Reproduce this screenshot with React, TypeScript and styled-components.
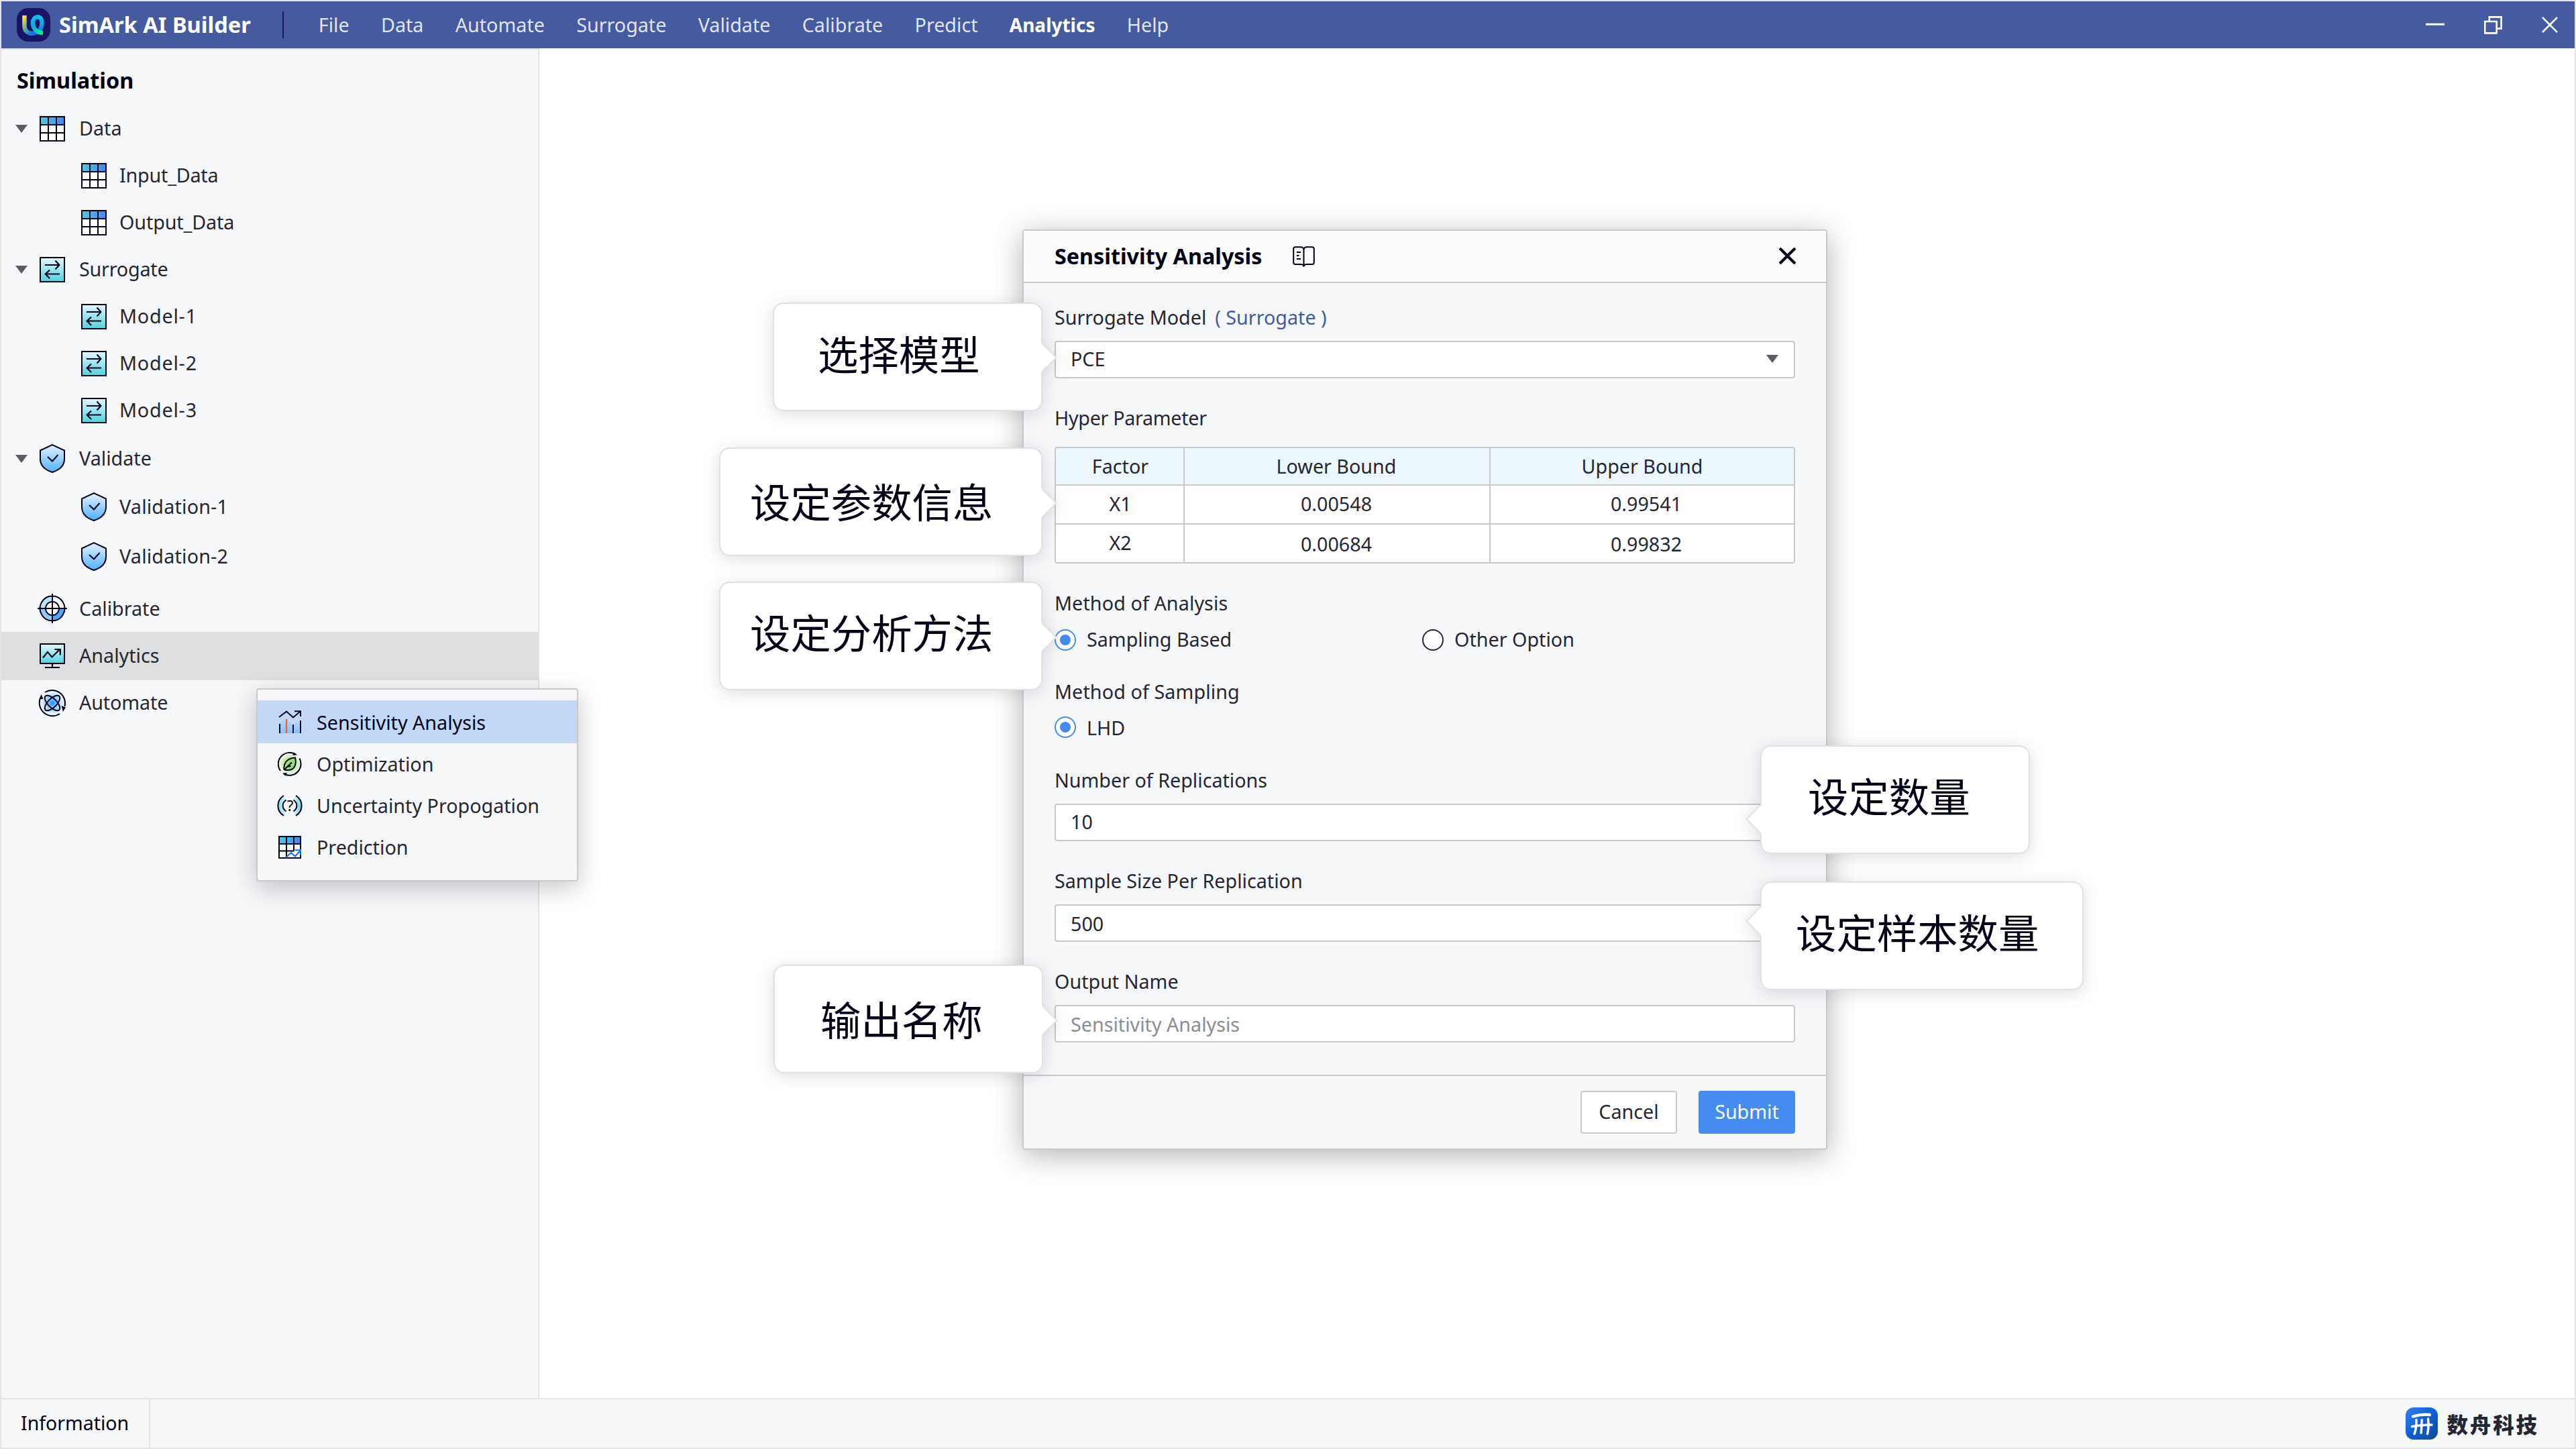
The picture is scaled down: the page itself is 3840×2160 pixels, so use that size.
import React from "react";
import styled, { createGlobalStyle, css } from "styled-components";

const color = {
  frame: "#e4e4e5",
  header: "#455a9f",
  navy: "#1a1464",
  panel: "#f6f7f9",
  line: "#c8c9cb",
  text: "#262633",
  ink: "#000014",
  primary: "#458bf0",
  caret: "#5b5b66",
};

const GlobalStyle = createGlobalStyle`
  *, *::before, *::after { box-sizing: border-box; }
  body {
    margin: 0;
    background: #fff;
    color: ${color.text};
    font-family: "Noto Sans", "Noto Sans CJK SC", sans-serif;
    font-size: 28.7px;
    line-height: 40px;
  }
`;

/* ---------- window frame ---------- */

const Window = styled.div`
  position: relative;
  display: flex;
  flex-direction: column;
  width: 3840px;
  height: 2160px;
  overflow: hidden;
  border: 2px solid ${color.frame};
  background: #fff;
`;

const Header = styled.header`
  display: flex;
  align-items: center;
  flex: none;
  height: 70px;
  padding-left: 23px;
  background: ${color.header};
`;

const Brand = styled.div`
  margin-left: 13px;
  color: #fff;
  font-size: 32.6px;
  font-weight: 700;
  white-space: nowrap;
`;

const HeaderDivider = styled.div`
  width: 2px;
  height: 40px;
  margin: 0 52px 0 47px;
  background: ${color.navy};
`;

const Menu = styled.nav`
  display: flex;
  gap: 47.25px;
`;

const MenuEntry = styled.span<{ $active?: boolean }>`
  color: rgba(255, 255, 255, 0.85);
  ${(p) =>
    p.$active &&
    css`
      color: #fff;
      font-size: 28px;
      font-weight: 700;
    `}
`;

const WindowControls = styled.div`
  display: flex;
  align-items: center;
  gap: 59px;
  margin-left: auto;
  padding-right: 25px;
`;

const Main = styled.div`
  display: flex;
  flex: 1;
`;

const Sidebar = styled.aside`
  width: 802px;
  border-top: 2px solid ${color.frame};
  border-right: 2px solid ${color.frame};
  background: ${color.panel};
`;

const SidebarTitle = styled.h2`
  margin: 25px 0 18px 23px;
  color: ${color.ink};
  font-size: 32.4px;
  font-weight: 700;
  line-height: 40px;
`;

const TreeRow = styled.div<{
  $height?: number;
  $gap?: number;
  $child?: boolean;
  $selected?: boolean;
}>`
  display: flex;
  align-items: center;
  height: ${(p) => p.$height ?? 70}px;
  margin-top: ${(p) => p.$gap ?? 0}px;
  padding-left: ${(p) => (p.$child ? 113 : 21)}px;
  background: ${(p) => (p.$selected ? "#dedfe1" : "transparent")};
`;

const CaretSlot = styled.span`
  display: flex;
  width: 30px;
`;

const IconSlot = styled.span`
  display: flex;
  align-items: center;
  justify-content: center;
  width: 50px;
  height: 50px;
`;

const TreeLabel = styled.span<{ $child?: boolean; $tracking?: number }>`
  margin-left: ${(p) => (p.$child ? 13 : 15)}px;
  padding-bottom: 2px;
  letter-spacing: ${(p) => p.$tracking ?? 0}px;
`;

const Footer = styled.footer`
  display: flex;
  align-items: stretch;
  flex: none;
  height: 74px;
  border-top: 2px solid ${color.frame};
  background: ${color.panel};
`;

const FooterCell = styled.div`
  display: flex;
  align-items: center;
  width: 222px;
  padding: 0 0 2px 29px;
  border-right: 2px solid ${color.frame};
  color: ${color.ink};
  font-size: 28.5px;
`;

const Company = styled.div`
  display: flex;
  align-items: center;
  gap: 13px;
  margin-left: auto;
  padding-right: 53px;
`;

const CompanyName = styled.span`
  font-family: "Noto Sans CJK SC", sans-serif;
  font-size: 31.5px;
  font-weight: 900;
  letter-spacing: 2.9px;
  line-height: 40px;
`;

/* ---------- context menu ---------- */

const ContextMenu = styled.div`
  position: absolute;
  left: 380px;
  top: 1024px;
  width: 480px;
  height: 288px;
  padding-top: 16px;
  border: 2px solid ${color.line};
  border-radius: 4px;
  background: ${color.panel};
  box-shadow: 0 10px 36px rgba(0, 0, 20, 0.22);
`;

const ContextItem = styled.div<{ $active?: boolean }>`
  display: flex;
  align-items: center;
  height: ${(p) => (p.$active ? 64 : 62)}px;
  padding-left: 23px;
  color: ${(p) => (p.$active ? color.ink : color.text)};
  background: ${(p) => (p.$active ? "#c3d8f6" : "transparent")};
`;

const ContextLabel = styled.span<{ $active?: boolean }>`
  margin-left: 15px;
  padding-top: ${(p) => (p.$active ? 2 : 0)}px;
`;

/* ---------- dialog ---------- */

const Dialog = styled.section`
  position: absolute;
  left: 1522px;
  top: 340px;
  display: flex;
  flex-direction: column;
  width: 1200px;
  height: 1372px;
  border: 2px solid ${color.line};
  border-radius: 4px;
  background: ${color.panel};
  box-shadow: 0 8px 44px rgba(0, 0, 20, 0.3);
`;

const DialogHeader = styled.header`
  display: flex;
  align-items: center;
  height: 78px;
  padding: 0 45px 2px 46px;
  border-bottom: 2px solid ${color.line};
  background: #fbfbfb;
`;

const DialogTitle = styled.h1`
  margin: 0 46px 0 0;
  color: ${color.ink};
  font-size: 32.3px;
  font-weight: 700;
  line-height: 40px;
`;

const BookSlot = styled.span`
  display: flex;
  padding-top: 3px;
`;

const CloseSlot = styled.span`
  display: flex;
  margin-left: auto;
`;

const DialogBody = styled.div`
  display: flex;
  flex-direction: column;
  flex: 1;
  padding: 0 46px;
`;

const Label = styled.div<{ $before: number; $after: number; $tracking?: number }>`
  margin-top: ${(p) => p.$before}px;
  margin-bottom: ${(p) => p.$after}px;
  height: 40px;
  letter-spacing: ${(p) => p.$tracking ?? 0}px;
  white-space: nowrap;
`;

const LabelLink = styled.span`
  margin-left: 13px;
  color: ${color.header};
`;

const Field = styled.div<{ $drop?: number; $lift?: number; $muted?: boolean }>`
  display: flex;
  align-items: center;
  justify-content: space-between;
  flex: none;
  height: 56px;
  padding: ${(p) => p.$drop ?? 0}px 23px ${(p) => p.$lift ?? 0}px 22px;
  border: 2px solid ${color.line};
  border-radius: 4px;
  background: #fff;
  color: ${(p) => (p.$muted ? "#8c8c93" : color.text)};
`;

const ParamTable = styled.div`
  display: grid;
  grid-template-columns: 192px 456px 452px;
  grid-template-rows: 56px 58px 56px;
  border: 2px solid ${color.line};
  border-radius: 4px;
  overflow: hidden;
  background: #fff;
`;

const Cell = styled.div<{
  $head?: boolean;
  $lastRow?: boolean;
  $lastCol?: boolean;
  $pad?: string;
}>`
  display: flex;
  align-items: center;
  justify-content: center;
  padding: ${(p) => p.$pad ?? "0"};
  border-right: ${(p) => (p.$lastCol ? 0 : 2)}px solid ${color.line};
  border-bottom: ${(p) => (p.$lastRow ? 0 : 2)}px solid ${color.line};
  background: ${(p) => (p.$head ? "#edf7fe" : "#fff")};
`;

const RadioGroup = styled.div`
  display: grid;
  grid-template-columns: 548px 1fr;
`;

const Radio = styled.div<{ $drop?: number; $lift?: number }>`
  display: flex;
  align-items: center;
  gap: 16px;
  height: 32px;

  span {
    padding-top: ${(p) => p.$drop ?? 0}px;
    padding-bottom: ${(p) => p.$lift ?? 0}px;
  }
`;

const RadioMark = styled.i<{ $checked?: boolean }>`
  display: flex;
  align-items: center;
  justify-content: center;
  width: 32px;
  height: 32px;
  border: 2px solid ${(p) => (p.$checked ? color.primary : color.text)};
  border-radius: 50%;
  background: #fff;

  &::after {
    content: "";
    width: 16px;
    height: 16px;
    border-radius: 50%;
    background: ${(p) => (p.$checked ? color.primary : "transparent")};
  }
`;

const DialogFooter = styled.footer`
  display: flex;
  justify-content: flex-end;
  gap: 32px;
  height: 110px;
  padding: 22px 46px 0;
  border-top: 2px solid ${color.line};
`;

const Button = styled.div<{ $primary?: boolean }>`
  display: flex;
  align-items: center;
  justify-content: center;
  width: 144px;
  height: 64px;
  padding-bottom: 2px;
  border: 2px solid ${(p) => (p.$primary ? color.primary : color.line)};
  border-radius: 4px;
  background: ${(p) => (p.$primary ? color.primary : "#fff")};
  color: ${(p) => (p.$primary ? "#fff" : color.text)};
`;

/* ---------- callouts ---------- */

const CalloutBox = styled.div<{
  $x: number;
  $y: number;
  $w: number;
  $indent: number;
  $rise: number;
}>`
  position: absolute;
  left: ${(p) => p.$x}px;
  top: ${(p) => p.$y}px;
  display: flex;
  align-items: center;
  width: ${(p) => p.$w}px;
  height: 162px;
  padding: 0 0 ${(p) => p.$rise * 2}px ${(p) => p.$indent}px;
  border: 2px solid #e0e1e5;
  border-radius: 16px;
  background: #fff;
  color: ${color.ink};
  font-family: "Noto Sans CJK SC", sans-serif;
  font-size: 60.4px;
  font-weight: 400;
  line-height: 80px;
  white-space: nowrap;
  filter: drop-shadow(0 4px 12px rgba(0, 0, 20, 0.13));
`;

const CalloutTail = styled.svg<{ $side: "left" | "right"; $at: number }>`
  position: absolute;
  top: ${(p) => p.$at - 24}px;
  ${(p) =>
    p.$side === "right"
      ? "right: -24px;"
      : "left: -24px; transform: scaleX(-1);"}
`;

type CalloutProps = {
  x: number;
  y: number;
  w: number;
  indent: number;
  rise: number;
  side: "left" | "right";
  at: number;
  children: React.ReactNode;
};

const Callout = ({ x, y, w, indent, rise, side, at, children }: CalloutProps) => (
  <CalloutBox $x={x} $y={y} $w={w} $indent={indent} $rise={rise}>
    {children}
    <CalloutTail $side={side} $at={at} width="26" height="44" viewBox="0 0 26 44">
      <path d="M0 0 H3 V0.5 L24.5 22 L3 43.5 V44 H0 Z" fill="#fff" />
      <path d="M3 0.5 L24.5 22 L3 43.5" fill="none" stroke="#e0e1e5" strokeWidth="2" />
    </CalloutTail>
  </CalloutBox>
);

/* ---------- icons ---------- */

const HiddenSvg = styled.svg`
  position: absolute;
`;

const Gradients = () => (
  <HiddenSvg width="0" height="0">
    <defs>
      <linearGradient id="gridHead" x1="0" x2="1">
        <stop offset="0" stopColor="#48cfe0" />
        <stop offset="1" stopColor="#4285f3" />
      </linearGradient>
      <linearGradient id="aqua" x1="0" y1="0" x2="0" y2="1">
        <stop offset="0" stopColor="#e4f8fc" />
        <stop offset="1" stopColor="#4fd2e1" />
      </linearGradient>
      <linearGradient id="sky" x1="0" y1="0" x2="0" y2="1">
        <stop offset="0" stopColor="#e6f3fe" />
        <stop offset="1" stopColor="#4eb0fd" />
      </linearGradient>
      <radialGradient id="atomGlow">
        <stop offset="0" stopColor="#2f9ef9" />
        <stop offset="0.6" stopColor="#a6d5fb" />
        <stop offset="1" stopColor="#f0f7fd" />
      </radialGradient>
      <radialGradient id="leafGlow">
        <stop offset="0" stopColor="#8fdc5c" />
        <stop offset="0.5" stopColor="#b5e893" />
        <stop offset="1" stopColor="#f6f7f9" />
      </radialGradient>
      <linearGradient id="waveLeft" x1="0" x2="1">
        <stop offset="0" stopColor="#7fd8ec" />
        <stop offset="1" stopColor="#e3f4fa" />
      </linearGradient>
      <linearGradient id="waveRight" x1="1" x2="0">
        <stop offset="0" stopColor="#5fcfe4" />
        <stop offset="1" stopColor="#e3f4fa" />
      </linearGradient>
    </defs>
  </HiddenSvg>
);

const Caret = () => (
  <svg width="18" height="12" viewBox="0 0 18 12">
    <path d="M0 0 H18 L9 12 Z" fill={color.caret} />
  </svg>
);

const GridIcon = () => (
  <svg width="38" height="38" viewBox="0 0 38 38">
    <rect width="38" height="38" fill="#fff" />
    <rect width="38" height="13" fill="url(#gridHead)" />
    <path
      d="M1 1 H37 V37 H1 Z M1 13 H37 M1 25 H37 M13 1 V37 M25 1 V37"
      fill="none"
      stroke={color.ink}
      strokeWidth="2"
    />
  </svg>
);

const SwapIcon = () => (
  <svg width="38" height="38" viewBox="0 0 38 38">
    <rect x="1" y="1" width="36" height="36" fill="url(#aqua)" stroke={color.ink} strokeWidth="2" />
    <path
      d="M8 12 H29 M23.5 5.5 L29.3 12 L23.5 18.5 M30 25.5 H9 M15 19.5 L8.7 25.5 L15 32"
      fill="none"
      stroke={color.ink}
      strokeWidth="2.2"
    />
  </svg>
);

const ShieldIcon = () => (
  <svg width="38" height="44" viewBox="0 0 38 44">
    <path
      d="M19 1.2 L37 9.5 V22 C37 32 30 38.5 19 42 C8 38.5 1 32 1 22 V9.5 Z"
      fill="url(#sky)"
      stroke={color.ink}
      strokeWidth="2"
    />
    <path d="M12 19 L19 25.5 L27.5 16" fill="none" stroke={color.ink} strokeWidth="2.2" />
  </svg>
);

const TargetIcon = () => (
  <svg width="44" height="46" viewBox="0 0 44 46">
    <path d="M22 22 V4 A18 18 0 0 0 4 22 Z" fill="#c0e0fd" />
    <path d="M22 22 V4 A18 18 0 0 1 40 22 Z" fill="#eef6ff" />
    <path d="M22 22 H40 A18 18 0 0 1 22 40 Z" fill="#4ca8fa" />
    <path d="M22 22 V40 A18 18 0 0 1 4 22 Z" fill="#90caff" />
    <circle cx="22" cy="22" r="10" fill="#fff" />
    <path
      d="M0 22 H44 M22 0 V44 M22 3.6 a18.4 18.4 0 1 0 0.01 0 M22 12 a10 10 0 1 0 0.01 0"
      fill="none"
      stroke={color.ink}
      strokeWidth="2"
    />
  </svg>
);

const MonitorIcon = () => (
  <svg width="38" height="38" viewBox="0 0 38 38">
    <rect x="1" y="1" width="36" height="29" fill="url(#aqua)" stroke={color.ink} strokeWidth="2" />
    <path
      d="M5 21.5 L12 13 L18.5 20.5 L30 9 M22.5 9 H30.8 V17.5 M19 30 V36 M8 36 H30"
      fill="none"
      stroke={color.ink}
      strokeWidth="2.2"
    />
  </svg>
);

const AtomIcon = () => (
  <svg width="42" height="42" viewBox="0 0 42 42">
    <circle cx="21" cy="21" r="17" fill="url(#atomGlow)" />
    <g fill="none" stroke={color.ink} strokeWidth="2">
      <ellipse cx="21" cy="21" rx="14.5" ry="6.5" transform="rotate(45 21 21)" />
      <ellipse cx="21" cy="21" rx="14.5" ry="6.5" transform="rotate(-45 21 21)" />
      <path d="M10 5 A19.5 19.5 0 0 1 39.5 26" />
      <path d="M32 37 A19.5 19.5 0 0 1 3.8 12" />
    </g>
    <path d="M34.5 25 L40.8 27.5 L37 34 Z M1.5 16 L4.4 8 L7.5 14.5 Z" fill={color.ink} />
    <circle cx="21" cy="21" r="3" fill="#2f9ef9" />
  </svg>
);

const SensitivityIcon = () => (
  <svg width="34" height="34" viewBox="0 0 34 34">
    <defs>
      <linearGradient id="bars" x1="0" y1="0" x2="0" y2="1">
        <stop offset="0" stopColor="#b9d7fa" />
        <stop offset="1" stopColor="#84c4fb" />
      </linearGradient>
    </defs>
    <path d="M1 19 L12 12 L22 21 L33 14 V34 H1 Z" fill="url(#bars)" />
    <path
      d="M2 20 V34 M22 21 V34 M33 15 V34 M1 10 L12 1.6 L22 10.5 L32 2 M24 1.2 H33 V9"
      fill="none"
      stroke={color.ink}
      strokeWidth="2"
    />
    <path d="M12 13 V34" stroke="#f0602c" strokeWidth="2.2" />
  </svg>
);

const LeafIcon = () => (
  <svg width="36" height="36" viewBox="0 0 36 36">
    <circle cx="18" cy="18" r="16" fill="url(#leafGlow)" />
    <g fill="none" stroke={color.ink} strokeWidth="2">
      <path d="M26 8.5 C28 17 26 25 18.5 26.5 C14 27.3 10.5 27 9.5 26 C8.5 18 13 9 26 8.5 Z" fill="#9be26c" />
      <path d="M9.5 26.5 L21 15.5 M14 22 L19.5 21" />
      <path d="M4 28 A17 17 0 0 1 26.5 3.4" />
      <path d="M32.4 9.5 A17 17 0 0 1 10 33" />
    </g>
    <path d="M22 5 L29 4.6 L24.5 0.8 Z M14 31 L7 31.5 L11.5 35.4 Z" fill={color.ink} />
  </svg>
);

const WaveIcon = () => (
  <svg width="38" height="32" viewBox="0 0 38 32">
    <path d="M10 1 C-2 8 -2 24 10 31 L13.5 24.5 C7 20 7 12 13.5 7.5 Z" fill="url(#waveLeft)" />
    <path d="M28 1 C40 8 40 24 28 31 L24.5 24.5 C31 20 31 12 24.5 7.5 Z" fill="url(#waveRight)" />
    <path
      d="M10 1 C-1.5 8 -1.5 24 10 31 M28 1 C39.5 8 39.5 24 28 31 M13.5 7.5 C7 12 7 20 13.5 24.5 M24.5 7.5 C31 12 31 20 24.5 24.5"
      fill="none"
      stroke={color.ink}
      strokeWidth="2"
    />
    <text x="19.5" y="24" textAnchor="middle" fontSize="22" fill={color.ink}>
      ?
    </text>
  </svg>
);

const PredictionIcon = () => (
  <svg width="34" height="34" viewBox="0 0 34 34">
    <rect width="34" height="34" fill="#fff" />
    <rect width="34" height="12" fill="url(#gridHead)" />
    <path
      d="M33 20 V1 H1 V33 H33 V29 M1 12 H33 M1 22.5 H23.5 M12 1 V33 M23 1 V22.5"
      fill="none"
      stroke={color.ink}
      strokeWidth="2"
    />
    <path d="M11 32.5 L19 25 L25 30.5 L32.5 22 M25 21.2 H33 V29" fill="none" stroke="#1170f5" strokeWidth="2" />
  </svg>
);

const BookIcon = () => (
  <svg width="33" height="31" viewBox="0 0 33 31">
    <g fill="none" stroke={color.ink} strokeWidth="2">
      <path d="M16.5 4 C15.5 1.8 14 1.2 12 1.2 H4 Q1.2 1.2 1.2 4 V24 Q1.2 27 4 27 H12 Q15.5 27 16.5 29.5 Q17.5 27 21 27 H29 Q31.8 27 31.8 24 V4 Q31.8 1.2 29 1.2 H21 C19 1.2 17.5 1.8 16.5 4 Z" />
      <path d="M16.5 3 V30 M6 9 H12 M6 14 H9.5 M6 19 H12" />
    </g>
  </svg>
);

const CloseIcon = ({ size, stroke, width }: { size: number; stroke: string; width: number }) => (
  <svg width={size} height={size} viewBox="0 0 24 24">
    <path d="M1 1 L23 23 M23 1 L1 23" stroke={stroke} strokeWidth={width} />
  </svg>
);

const MinimizeIcon = () => (
  <svg width="28" height="28" viewBox="0 0 28 28">
    <path d="M0 13.2 H28" stroke="#fff" strokeWidth="3" />
  </svg>
);

const RestoreIcon = () => (
  <svg width="27" height="27" viewBox="0 0 27 27">
    <path
      d="M1.3 8 H18.7 V25.4 H1.3 Z M7.8 8 V1.4 H25.6 V18.6 H19"
      fill="none"
      stroke="#fff"
      strokeWidth="2.6"
    />
  </svg>
);

const AppLogo = () => (
  <svg width="50" height="50" viewBox="0 0 50 50">
    <defs>
      <linearGradient id="logoU" x1="0" y1="0" x2="0.6" y2="1">
        <stop offset="0" stopColor="#ffe23c" />
        <stop offset="0.6" stopColor="#5fa8a0" />
        <stop offset="1" stopColor="#1b7fe0" />
      </linearGradient>
      <linearGradient id="logoRing" x1="0" y1="0" x2="0" y2="1">
        <stop offset="0" stopColor="#12c4ee" />
        <stop offset="1" stopColor="#1a6fdf" />
      </linearGradient>
      <linearGradient id="logoTail" x1="0" y1="0" x2="0.5" y2="1">
        <stop offset="0" stopColor="#14bdf0" />
        <stop offset="0.5" stopColor="#0fa5d8" />
        <stop offset="1" stopColor="#06e8a0" />
      </linearGradient>
    </defs>
    <rect width="50" height="50" rx="17" fill={color.navy} />
    <g fill="none" strokeWidth="6.5">
      <path d="M11.5 11 V26 C11.5 34 16 38 24 38" stroke="url(#logoU)" />
      <path d="M22 38 C32 37.5 37.5 31 37.5 22 C37.5 17 35 13.3 31 13.3" stroke="url(#logoRing)" />
      <path d="M31.5 13.3 C26.5 13.3 24 17.5 24 22 C24 30 29 36 39 37.2" stroke="url(#logoTail)" />
    </g>
  </svg>
);

const CompanyLogo = () => (
  <svg width="48" height="48" viewBox="0 0 48 48">
    <defs>
      <linearGradient id="companyBg" x1="0" y1="0" x2="1" y2="1">
        <stop offset="0" stopColor="#3180ee" />
        <stop offset="0.5" stopColor="#0f5fd6" />
        <stop offset="1" stopColor="#12489c" />
      </linearGradient>
    </defs>
    <rect width="48" height="48" rx="12" fill="url(#companyBg)" />
    <g fill="none" stroke="#fff" strokeLinecap="round">
      <path d="M11 13.5 Q24 9.5 36 11" strokeWidth="4.4" />
      <path d="M9.5 28.5 Q24 25.5 39 26" strokeWidth="3.6" />
      <path d="M16 18.5 Q16.5 31 13 39.5" strokeWidth="3.4" />
      <path d="M24.2 18.5 L23.2 38" strokeWidth="3.4" />
      <path d="M33.5 17 Q35 29 32.5 39.5" strokeWidth="3.4" />
    </g>
  </svg>
);

/* ---------- data ---------- */

type TreeEntry = {
  label: string;
  icon: React.ReactNode;
  child?: boolean;
  open?: boolean;
  selected?: boolean;
  height?: number;
  gap?: number;
  tracking?: number;
};

const tree: TreeEntry[] = [
  { label: "Data", icon: <GridIcon />, open: true },
  { label: "Input_Data", icon: <GridIcon />, child: true, tracking: -0.2 },
  { label: "Output_Data", icon: <GridIcon />, child: true, tracking: -0.1 },
  { label: "Surrogate", icon: <SwapIcon />, open: true, tracking: -0.2 },
  { label: "Model-1", icon: <SwapIcon />, child: true, tracking: 0.8 },
  { label: "Model-2", icon: <SwapIcon />, child: true, tracking: 0.8 },
  { label: "Model-3", icon: <SwapIcon />, child: true, tracking: 0.8 },
  { label: "Validate", icon: <ShieldIcon />, open: true, height: 72, gap: 1 },
  { label: "Validation-1", icon: <ShieldIcon />, child: true, height: 72, tracking: 0.2 },
  { label: "Validation-2", icon: <ShieldIcon />, child: true, height: 72, gap: 2, tracking: 0.2 },
  { label: "Calibrate", icon: <TargetIcon />, height: 68, gap: 8 },
  { label: "Analytics", icon: <MonitorIcon />, height: 72, selected: true },
  { label: "Automate", icon: <AtomIcon />, height: 68, tracking: -0.1 },
];

const menu = ["File", "Data", "Automate", "Surrogate", "Validate", "Calibrate", "Predict", "Analytics", "Help"];

const contextItems = [
  { label: "Sensitivity Analysis", icon: <SensitivityIcon />, active: true },
  { label: "Optimization", icon: <LeafIcon /> },
  { label: "Uncertainty Propogation", icon: <WaveIcon /> },
  { label: "Prediction", icon: <PredictionIcon /> },
];

export default function App() {
  return (
    <>
      <GlobalStyle />
      <Gradients />
      <Window>
        <Header>
          <AppLogo />
          <Brand>SimArk AI Builder</Brand>
          <HeaderDivider />
          <Menu>
            {menu.map((m) => (
              <MenuEntry key={m} $active={m === "Analytics"}>
                {m}
              </MenuEntry>
            ))}
          </Menu>
          <WindowControls>
            <MinimizeIcon />
            <RestoreIcon />
            <CloseIcon size={24} stroke="#fff" width={2.6} />
          </WindowControls>
        </Header>

        <Main>
          <Sidebar>
            <SidebarTitle>Simulation</SidebarTitle>
            {tree.map((t) => (
              <TreeRow key={t.label} $height={t.height} $gap={t.gap} $child={t.child} $selected={t.selected}>
                {!t.child && <CaretSlot>{t.open && <Caret />}</CaretSlot>}
                <IconSlot>{t.icon}</IconSlot>
                <TreeLabel $child={t.child} $tracking={t.tracking}>
                  {t.label}
                </TreeLabel>
              </TreeRow>
            ))}
          </Sidebar>
        </Main>

        <Footer>
          <FooterCell>Information</FooterCell>
          <Company>
            <CompanyLogo />
            <CompanyName>数舟科技</CompanyName>
          </Company>
        </Footer>

        <ContextMenu>
          {contextItems.map((c) => (
            <ContextItem key={c.label} $active={c.active}>
              <IconSlot>{c.icon}</IconSlot>
              <ContextLabel $active={c.active}>{c.label}</ContextLabel>
            </ContextItem>
          ))}
        </ContextMenu>

        <Dialog>
          <DialogHeader>
            <DialogTitle>Sensitivity Analysis</DialogTitle>
            <BookSlot>
              <BookIcon />
            </BookSlot>
            <CloseSlot>
              <CloseIcon size={25} stroke={color.ink} width={4} />
            </CloseSlot>
          </DialogHeader>
          <DialogBody>
            <Label $before={31} $after={15}>
              Surrogate Model<LabelLink>( Surrogate )</LabelLink>
            </Label>
            <Field $lift={2}>
              PCE
              <Caret />
            </Field>
            <Label $before={39} $after={23} $tracking={-0.3}>
              Hyper Parameter
            </Label>
            <ParamTable>
              <Cell $head $pad="0 0 0 2px">Factor</Cell>
              <Cell $head $pad="0 2px 0 0">Lower Bound</Cell>
              <Cell $head $lastCol>Upper Bound</Cell>
              <Cell $pad="0 0 2px 2px">X1</Cell>
              <Cell $pad="0 2px 2px 0">0.00548</Cell>
              <Cell $pad="0 0 2px 12px" $lastCol>0.99541</Cell>
              <Cell $pad="0 0 2px 2px" $lastRow>X2</Cell>
              <Cell $pad="2px 2px 0 0" $lastRow>0.00684</Cell>
              <Cell $pad="2px 0 0 12px" $lastRow $lastCol>0.99832</Cell>
            </ParamTable>
            <Label $before={39} $after={19} $tracking={0.1}>
              Method of Analysis
            </Label>
            <RadioGroup>
              <Radio $lift={2}>
                <RadioMark $checked />
                <span>Sampling Based</span>
              </Radio>
              <Radio $lift={2}>
                <RadioMark />
                <span>Other Option</span>
              </Radio>
            </RadioGroup>
            <Label $before={41} $after={17} $tracking={0.1}>
              Method of Sampling
            </Label>
            <Radio $drop={2}>
              <RadioMark $checked />
              <span>LHD</span>
            </Radio>
            <Label $before={43} $after={15}>Number of Replications</Label>
            <Field $lift={2}>10</Field>
            <Label $before={39} $after={15}>Sample Size Per Replication</Label>
            <Field $drop={2}>500</Field>
            <Label $before={39} $after={15}>Output Name</Label>
            <Field $drop={2} $muted>Sensitivity Analysis</Field>
          </DialogBody>
          <DialogFooter>
            <Button>Cancel</Button>
            <Button $primary>Submit</Button>
          </DialogFooter>
        </Dialog>

        <Callout x={1150} y={449} w={402} indent={65} rise={6} side="right" at={82}>选择模型</Callout>
        <Callout x={1070} y={665} w={482} indent={44} rise={2} side="right" at={83}>设定参数信息</Callout>
        <Callout x={1070} y={865} w={482} indent={44} rise={7} side="right" at={83}>设定分析方法</Callout>
        <Callout x={1151} y={1436} w={402} indent={68} rise={1} side="right" at={83}>输出名称</Callout>
        <Callout x={2622} y={1109} w={402} indent={69} rise={7} side="left" at={110}>设定数量</Callout>
        <Callout x={2622} y={1312} w={482} indent={51} rise={7} side="left" at={59}>设定样本数量</Callout>
      </Window>
    </>
  );
}
